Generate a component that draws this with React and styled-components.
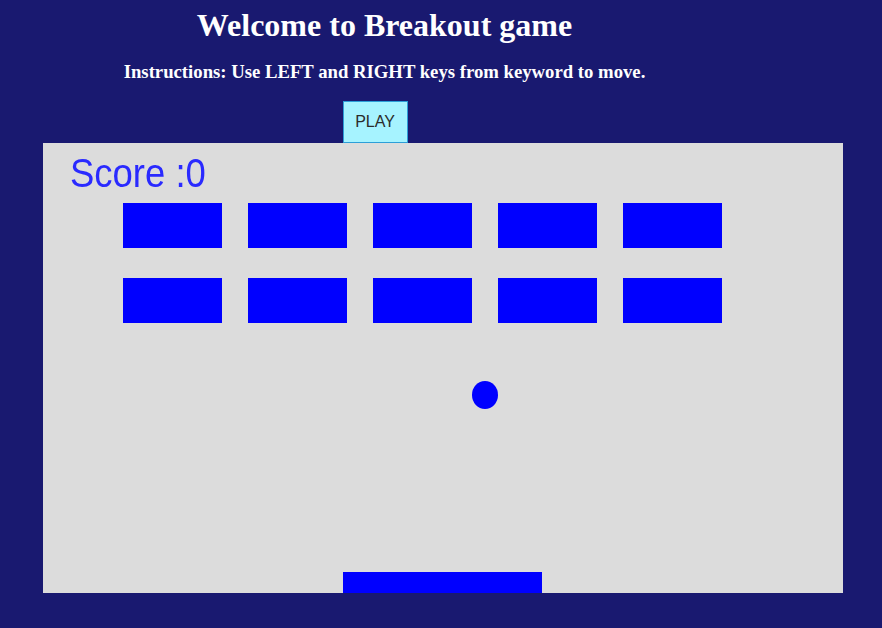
import styled, { createGlobalStyle } from "styled-components";

/* ======================
   GLOBAL
====================== */

const GlobalStyle = createGlobalStyle`
  html, body {
    margin: 0;
    padding: 0;
    background: #191970;
    overflow: hidden;
  }
`;

/* ======================
   STYLED COMPONENTS
====================== */

const Page = styled.div`
  width: 882px;
  height: 628px;
  background: #191970;
  font-family: "Liberation Serif", "Times New Roman", serif;
  color: #ffffff;
`;

const Header = styled.header`
  width: 769px;
  text-align: center;
`;

const Title = styled.h1`
  margin: 0;
  padding-top: 7px;
  font-size: 32px;
  line-height: 37px;
  font-weight: 700;
`;

const Instructions = styled.h3`
  margin: 17px 0 0;
  font-size: 18.72px;
  line-height: 22px;
  font-weight: 700;
`;

const Controls = styled.div`
  width: 750px;
  display: flex;
  justify-content: center;
  margin-top: 18px;
`;

const PlayButton = styled.button`
  width: 65px;
  height: 42px;
  padding: 0;
  background: #a6f3ff;
  border: 1px solid #2d9fd8;
  color: #2b2b2b;
  font-family: "Liberation Sans", Arial, sans-serif;
  font-size: 16px;
  cursor: pointer;
`;

const Board = styled.svg`
  display: block;
  margin-left: 43px;
  background: #dcdcdc;
`;

/* ======================
   COMPONENT
====================== */

const COLS = 5;
const ROWS = 2;

const bricks = [];
for (let r = 0; r < ROWS; r++) {
  for (let c = 0; c < COLS; c++) {
    bricks.push({ x: 80 + c * 125, y: 60 + r * 75 });
  }
}

const App = () => {
  return (
    <Page>
      <GlobalStyle />
      <Header>
        <Title>Welcome to Breakout game</Title>
        <Instructions>
          Instructions: Use LEFT and RIGHT keys from keyword to move.
        </Instructions>
      </Header>

      <Controls>
        <PlayButton type="button">PLAY</PlayButton>
      </Controls>

      <Board width="800" height="450" viewBox="0 0 800 450">
        <defs>
          <filter id="soft" x="-5%" y="-5%" width="110%" height="110%">
            <feGaussianBlur stdDeviation="0.5" />
          </filter>
        </defs>
        <text
          x="0"
          y="0"
          transform="translate(27 44) scale(0.96 1.08)"
          fill="#2a2aff"
          fontFamily="Liberation Sans, Arial, sans-serif"
          fontSize="38"
          filter="url(#soft)"
        >
          Score :0
        </text>
        <g fill="#0000ff" filter="url(#soft)">
          {bricks.map((b, i) => (
            <rect key={i} x={b.x} y={b.y} width="99" height="45" />
          ))}
          <ellipse cx="442" cy="252" rx="13" ry="14" />
          <rect x="300" y="429" width="199" height="30" />
        </g>
      </Board>
    </Page>
  );
};

export default App;
